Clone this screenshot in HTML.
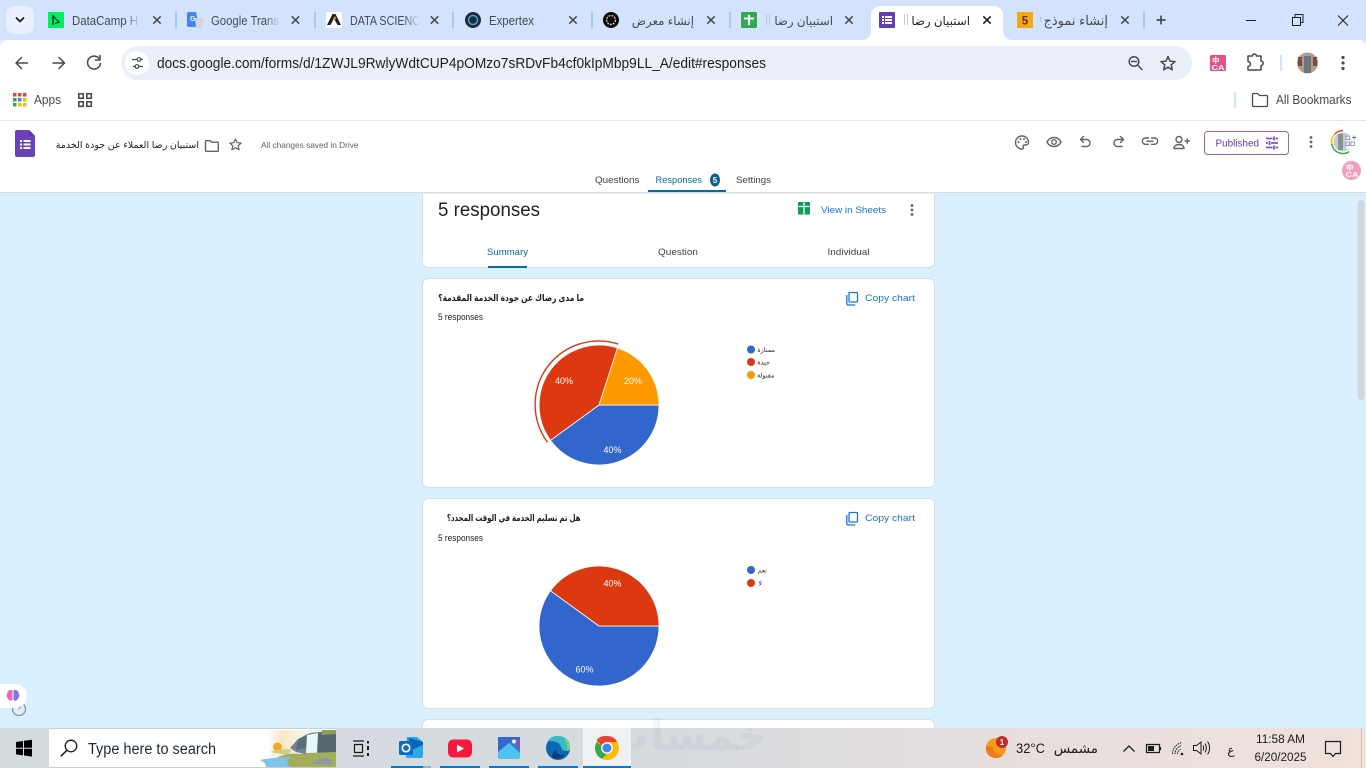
<!DOCTYPE html>
<html lang="en"><head><meta charset="utf-8"><title>Responses</title>
<style>
html,body{margin:0;padding:0;width:1366px;height:768px;overflow:hidden;background:#d9f0fe}
svg{display:block;position:absolute;left:0;top:0}
text{font-family:"Liberation Sans","Noto Sans CJK SC",sans-serif}
.t{font-size:12.5px;fill:#474a4f}
.ta{font-size:11.8px;fill:#474a4f}
.ar{font-family:"Liberation Sans","DejaVu Sans",sans-serif;direction:rtl}
.ic{fill:none;stroke:#5f6368;stroke-width:1.4;stroke-linecap:round;stroke-linejoin:round}
.bi{fill:none;stroke:#474a4f;stroke-width:1.5;stroke-linecap:round;stroke-linejoin:round}
.x{fill:none;stroke:#474a4f;stroke-width:1.5}
.tk{fill:none;stroke:#1c1c1c;stroke-width:1.2;stroke-linecap:round;stroke-linejoin:round}
</style></head><body>
<svg width="1366" height="768" viewBox="0 0 1366 768" xmlns="http://www.w3.org/2000/svg">
<defs>
<linearGradient id="tb" x1="0" x2="1" y1="0" y2="0"><stop offset="0" stop-color="#d3dbdf"/><stop offset=".5" stop-color="#d7dbe0"/><stop offset=".75" stop-color="#e7dedd"/><stop offset="1" stop-color="#f0e1da"/></linearGradient>
<linearGradient id="fd" x1="0" x2="1" y1="0" y2="0"><stop offset="0" stop-color="#d3e3fd" stop-opacity="0"/><stop offset="1" stop-color="#d3e3fd"/></linearGradient>
<linearGradient id="sk" x1="0" x2="1" y1="0" y2="0"><stop offset="0" stop-color="#fff"/><stop offset=".12" stop-color="#fff"/><stop offset=".3" stop-color="#fde6c8"/><stop offset=".55" stop-color="#f4f2e4"/><stop offset="1" stop-color="#dfeef2"/></linearGradient>
</defs>

<!-- page background -->
<rect width="1366" height="768" fill="#d9f0fe"/>

<!-- tab strip -->
<rect width="1366" height="40" fill="#d3e3fd"/>
<rect x="6" y="6" width="28" height="28" rx="8" fill="#e8f0fd"/>
<path d="M16.500 18l3.500 3.500 3.500-3.500" fill="none" stroke="#1f1f1f" stroke-width="1.800" stroke-linecap="round" stroke-linejoin="round"/>

<!-- separators -->
<g fill="#a8c7fa"><rect x="175" y="12" width="2" height="16"/><rect x="314" y="12" width="2" height="16"/><rect x="452" y="12" width="2" height="16"/><rect x="591" y="12" width="2" height="16"/><rect x="729" y="12" width="2" height="16"/><rect x="1143" y="12" width="2" height="16"/></g>

<!-- tab 1 -->
<rect x="48" y="12" width="16" height="16" fill="#03ef62"/>
<path d="M53 15v10M53 16l6 6-4 1.500" fill="none" stroke="#05192d" stroke-width="1.200"/>
<text x="72" y="25" class="t" textLength="66" lengthAdjust="spacingAndGlyphs">DataCamp H</text>
<rect x="126" y="12" width="14" height="16" fill="url(#fd)"/>
<!-- tab 2 -->
<path d="M189 12h7l3 15h-10a2 2 0 0 1-2-2V14a2 2 0 0 1 2-2z" fill="#4285f4"/>
<path d="M195 18h8v10h-7z" fill="#d6d6d6"/>
<text x="190" y="21" font-size="7" font-weight="bold" fill="#fff">G</text>
<text x="211" y="25" class="t" textLength="68" lengthAdjust="spacingAndGlyphs">Google Trans</text>
<rect x="265" y="12" width="15" height="16" fill="url(#fd)"/>
<!-- tab 3 -->
<rect x="326" y="12" width="16" height="16" fill="#fff"/>
<path d="M327 25l5.500-11h3l5.500 11h-3.500l-3.500-6.500-3.500 6.500z" fill="#222"/><path d="M333 19l2-3 1.200 3z" fill="#f59e0b"/>
<text x="350" y="25" class="t" textLength="70" lengthAdjust="spacingAndGlyphs">DATA SCIENC</text>
<rect x="404" y="12" width="16" height="16" fill="url(#fd)"/>
<!-- tab 4 -->
<circle cx="473" cy="20" r="8" fill="#1d2b36"/><circle cx="473" cy="20" r="4.500" fill="none" stroke="#4aa3d8" stroke-width="1.500"/>
<text x="489" y="25" class="t" textLength="45" lengthAdjust="spacingAndGlyphs">Expertex</text>
<!-- tab 5 -->
<circle cx="611" cy="20" r="8" fill="#0b0b0b"/><circle cx="611" cy="20" r="4.400" fill="none" stroke="#cfcfcf" stroke-width="1.300" stroke-dasharray="2 1"/>
<text x="694" y="25" class="ta ar" text-anchor="start">إنشاء معرض</text>
<!-- tab 6 -->
<rect x="741" y="12" width="16" height="16" rx="1.500" fill="#34a853"/><path d="M749 15v10M744 18.500h10" stroke="#fff" stroke-width="2"/>
<text x="833" y="25" class="ta ar" text-anchor="start">استبيان رضا</text>
<g fill="#b9c6dc"><rect x="766" y="14" width="1" height="11"/><rect x="769" y="14" width="1" height="11"/></g>

<!-- active tab -->
<path d="M862 40a9 9 0 0 0 9-9V15a9 9 0 0 1 9-9h114a9 9 0 0 1 9 9v16a9 9 0 0 0 9 9z" fill="#fff"/>
<rect x="879" y="12" width="16" height="16" rx="1" fill="#673ab7"/>
<g fill="#fff"><rect x="882" y="16" width="2" height="2"/><rect x="885" y="16" width="7" height="2"/><rect x="882" y="19" width="2" height="2"/><rect x="885" y="19" width="7" height="2"/><rect x="882" y="22" width="2" height="2"/><rect x="885" y="22" width="7" height="2"/></g>
<text x="970" y="25" class="ta ar" text-anchor="start" style="fill:#1f1f1f">استبيان رضا</text>
<g fill="#c9c9c9"><rect x="904" y="14" width="1" height="11"/><rect x="907" y="14" width="1" height="11"/></g>
<!-- tab 8 -->
<rect x="1017" y="12" width="16" height="16" fill="#f9a51a"/>
<text x="1025" y="24.500" font-size="11.500" font-weight="bold" fill="#5b3a0a" text-anchor="middle">5</text>
<text x="1108" y="25" class="ar" font-size="13" fill="#474a4f" text-anchor="start">إنشاء نموذج</text>
<rect x="1040" y="17" width="1.500" height="5" fill="#b9c6dc"/>

<!-- close icons -->
<g class="x">
<path d="M153.300 16.300l7.400 7.400M160.700 16.300l-7.400 7.400"/><path d="M291.800 16.300l7.400 7.400M299.200 16.300l-7.400 7.400"/><path d="M430.800 16.300l7.400 7.400M438.200 16.300l-7.400 7.400"/><path d="M569.300 16.300l7.400 7.400M576.700 16.300l-7.400 7.400"/><path d="M707.300 16.300l7.400 7.400M714.700 16.300l-7.400 7.400"/><path d="M845.300 16.300l7.400 7.400M852.700 16.300l-7.400 7.400"/><path d="M983.300 16.300l7.400 7.400M990.700 16.300l-7.400 7.400" style="stroke:#1f1f1f"/><path d="M1121.300 16.300l7.400 7.400M1128.700 16.300l-7.400 7.400"/>
</g>
<path d="M1161 15.500v9M1156.500 20h9" stroke="#474a4f" stroke-width="1.700" fill="none"/>
<!-- window controls -->
<path d="M1246 20.500h10" stroke="#1f1f1f" stroke-width="1"/>
<path d="M1292.500 17.500h8v8h-8zM1295 17v-2.500h8v8h-2.500" fill="none" stroke="#1f1f1f" stroke-width="1"/>
<path d="M1338 15.500l10 10M1348 15.500l-10 10" stroke="#1f1f1f" stroke-width="1"/>

<!-- toolbar -->
<path d="M0 48a8 8 0 0 1 8-8H1358a8 8 0 0 1 8 8V121H0z" fill="#fff"/>
<path d="M27.500 63H16.500M21.500 57.500l-5.500 5.500 5.500 5.500" class="bi"/>
<path d="M53 63h11M59 57.500l5.500 5.500-5.500 5.500" class="bi"/>
<path d="M99.500 59a6.500 6.500 0 1 0 1 4.500M100 55.500v4.500h-4.500" class="bi"/>
<rect x="121" y="46" width="1071" height="34" rx="17" fill="#eaeff9"/>
<circle cx="137" cy="63" r="12" fill="#fff"/>
<path d="M132 59.500h5M141 59.500h2M133 66.500h2M139 66.500h4" fill="none" stroke="#474a4f" stroke-width="1.300"/><circle cx="139" cy="59.500" r="1.800" fill="none" stroke="#474a4f" stroke-width="1.200"/><circle cx="137" cy="66.500" r="1.800" fill="none" stroke="#474a4f" stroke-width="1.200"/>
<text x="157" y="68" font-size="14.300" fill="#1f1f1f" textLength="609" lengthAdjust="spacingAndGlyphs">docs.google.com/forms/d/1ZWJL9RwlyWdtCUP4pOMzo7sRDvFb4cf0kIpMbp9LL_A/edit#responses</text>
<circle cx="1134" cy="61.500" r="4.800" class="bi"/><path d="M1138 65.500l4 4M1131.500 61.500h5" class="bi"/>
<path d="M1168 56.500l2 4.600 5 .5-3.800 3.300 1.100 4.900-4.300-2.600-4.300 2.600 1.100-4.900-3.800-3.300 5-.5z" class="bi"/>
<rect x="1210" y="55" width="16" height="16" rx="1.500" fill="#e84f88"/>
<text x="1212" y="62.800" font-size="7.500" font-weight="bold" fill="#fff" style="font-family:'Noto Sans CJK SC',sans-serif">中</text>
<text x="1211.500" y="69.800" font-size="7.500" font-weight="bold" fill="#fff" textLength="13" lengthAdjust="spacingAndGlyphs">CA</text>
<path d="M1248 56h4.500a2 2 0 0 1 4 0h4.500v5a2.200 2.200 0 0 1 0 4.400v4.600h-13v-3.500a2.500 2.500 0 0 0 0-5z" class="bi"/>
<rect x="1280" y="55" width="2" height="16" fill="#d3e3fd"/>
<circle cx="1307.500" cy="63" r="10.500" fill="#a89e92"/><path d="M1304 56h7v17h-7z" fill="#70757b"/><path d="M1298 57h4v9h-4zM1313 57h4v9h-4z" fill="#7a4c40"/>
<g fill="#474a4f"><circle cx="1343" cy="57.500" r="1.600"/><circle cx="1343" cy="63" r="1.600"/><circle cx="1343" cy="68.500" r="1.600"/></g>

<!-- bookmarks bar -->
<g>
<rect x="13" y="93" width="3.500" height="3.500" fill="#ea4335"/><rect x="18" y="93" width="3.500" height="3.500" fill="#ea4335"/><rect x="23" y="93" width="3.500" height="3.500" fill="#ea4335"/>
<rect x="13" y="98" width="3.500" height="3.500" fill="#34a853"/><rect x="18" y="98" width="3.500" height="3.500" fill="#4285f4"/><rect x="23" y="98" width="3.500" height="3.500" fill="#fbbc04"/>
<rect x="13" y="103" width="3.500" height="3.500" fill="#34a853"/><rect x="18" y="103" width="3.500" height="3.500" fill="#fbbc04"/><rect x="23" y="103" width="3.500" height="3.500" fill="#fbbc04"/>
</g>
<text x="34" y="104" font-size="12.500" fill="#474a4f" textLength="27" lengthAdjust="spacingAndGlyphs">Apps</text>
<g fill="none" stroke="#474a4f" stroke-width="1.600"><rect x="78.800" y="93.800" width="4.500" height="4.500"/><rect x="86.800" y="93.800" width="4.500" height="4.500"/><rect x="78.800" y="101.800" width="4.500" height="4.500"/><rect x="86.800" y="101.800" width="4.500" height="4.500"/></g>
<rect x="1234" y="92" width="2" height="16" fill="#d3e3fd"/>
<path d="M1252.500 94.500a1 1 0 0 1 1-1h4l2 2h7a1 1 0 0 1 1 1v9a1 1 0 0 1-1 1h-13a1 1 0 0 1-1-1z" fill="none" stroke="#474a4f" stroke-width="1.300"/>
<text x="1276" y="104" font-size="12.500" fill="#474a4f" textLength="75.500" lengthAdjust="spacingAndGlyphs">All Bookmarks</text>

<!-- forms header -->
<rect x="0" y="120" width="1366" height="1" fill="#e3e3e3"/>
<rect x="0" y="121" width="1366" height="71" fill="#fff"/>
<rect x="0" y="192" width="1366" height="1" fill="#d5dde3"/>
<path d="M15 132a2 2 0 0 1 2-2h12l6 6v19a2 2 0 0 1-2 2H17a2 2 0 0 1-2-2z" fill="#6d42b8"/>
<path d="M29 130l6 6h-6z" fill="#5a34a0"/>
<g fill="#fff"><rect x="20" y="140" width="2" height="2"/><rect x="23.500" y="140" width="7" height="2"/><rect x="20" y="143.500" width="2" height="2"/><rect x="23.500" y="143.500" width="7" height="2"/><rect x="20" y="147" width="2" height="2"/><rect x="23.500" y="147" width="7" height="2"/></g>
<text x="199" y="148" font-size="9.500" fill="#202124" class="ar" text-anchor="start">استبيان رضا العملاء عن جودة الخدمة</text>
<path d="M205.500 141.500a.8.8 0 0 1 .8-.8h4l1.500 1.500h5.700a.8.8 0 0 1 .8.800v7.500a.8.8 0 0 1-.8.800H206.300a.8.8 0 0 1-.8-.8z" class="ic"/>
<path d="M235.500 139l1.700 3.700 4 .4-3 2.700.9 4-3.600-2.100-3.600 2.100.9-4-3-2.700 4-.4z" fill="none" stroke="#5f6368" stroke-width="1.200" stroke-linejoin="round"/>
<text x="261" y="148" font-size="8.500" fill="#5f6368" textLength="97.500" lengthAdjust="spacingAndGlyphs">All changes saved in Drive</text>

<!-- header icons -->
<path d="M1022 136a6.500 6.500 0 0 0 0 13c1.400 0 1.700-1 1.200-1.900-.6-1 0-2.100 1.300-2.100h1.600a2.500 2.500 0 0 0 2.400-2.600c0-3.500-2.900-6.400-6.500-6.400z" class="ic"/>
<g fill="#5f6368"><circle cx="1018.500" cy="142" r="1"/><circle cx="1020.500" cy="139" r="1"/><circle cx="1024" cy="139" r="1"/><circle cx="1026" cy="142" r="1"/></g>
<path d="M1047 142c1.500-3 4-4.500 7-4.500s5.500 1.500 7 4.500c-1.500 3-4 4.500-7 4.500s-5.500-1.500-7-4.500z" class="ic"/><circle cx="1054" cy="142" r="2.300" class="ic"/>
<path d="M1083.500 136.500l-3 3 3 3M1081 139.500h5.500a3.500 3.500 0 0 1 0 7H1082" class="ic"/>
<path d="M1120.500 136.500l3 3-3 3M1123 139.500h-5.500a3.500 3.500 0 0 0 0 7h4.500" class="ic"/>
<path d="M1148.500 138h-3a3 3 0 0 0 0 6.300h3M1151.500 138h3a3 3 0 0 1 0 6.300h-3M1147 141.200h6" class="ic"/>
<circle cx="1179" cy="139.500" r="3" class="ic"/><path d="M1174 148.500c0-2.500 2-4 5-4s5 1.500 5 4zM1185 141h4.500M1187.200 138.800v4.500" class="ic"/>
<rect x="1204.500" y="131.500" width="84" height="23" rx="3" fill="#fff" stroke="#8a63cc" stroke-width="1"/>
<text x="1215.500" y="146.500" font-size="9.800" fill="#673ab7" textLength="43.500" lengthAdjust="spacingAndGlyphs">Published</text>
<path d="M1266 138.500h6.500M1275.500 138.500h2.500M1266 143h2M1271 143h7M1266 147.500h6.500M1275.500 147.500h2.500M1274 136.500v4M1269.500 141v4M1274 145.500v4" fill="none" stroke="#7e57c2" stroke-width="1.800"/>
<g fill="#5f6368"><circle cx="1311" cy="137.500" r="1.400"/><circle cx="1311" cy="142" r="1.400"/><circle cx="1311" cy="146.500" r="1.400"/></g>
<!-- avatar w/ ring -->
<circle cx="1343" cy="142" r="12.500" fill="#fff"/>
<path d="M1343 130.500a11.500 11.500 0 0 0-8.100 3.400" fill="none" stroke="#ea4335" stroke-width="1.500"/>
<path d="M1334.900 133.900a11.500 11.500 0 0 0-3.200 10" fill="none" stroke="#fbbc04" stroke-width="1.500"/>
<path d="M1331.700 143.900a11.500 11.500 0 0 0 11.300 9.600 11.500 11.500 0 0 0 6-1.700" fill="none" stroke="#34a853" stroke-width="1.500"/>
<circle cx="1343" cy="142" r="9.500" fill="#c9ccce"/><path d="M1338 134h5v16h-5z" fill="#8a8f94"/>
<path d="M1346 135h13v14h-13z" fill="#fff" opacity=".75"/>
<g fill="none" stroke="#7a8ea8" stroke-width=".8"><rect x="1346" y="136" width="3.500" height="3.500"/><rect x="1346" y="142" width="3.500" height="3.500"/><rect x="1351" y="142" width="3.500" height="3.500"/></g>
<path d="M1354 135.500v4M1352 137.500h4" stroke="#5b7fb5" stroke-width="1" fill="none"/>
<!-- pink translate pill -->
<path d="M1366 159h-14a11 11 0 0 0 0 22h14z" fill="#fff"/>
<circle cx="1351.500" cy="170.500" r="9.500" fill="#f29fb7"/>
<text x="1346" y="170" font-size="7.500" font-weight="bold" fill="#fff" style="font-family:'Noto Sans CJK SC',sans-serif">中</text>
<text x="1345.500" y="177" font-size="7.500" font-weight="bold" fill="#fff" textLength="13" lengthAdjust="spacingAndGlyphs">CA</text>

<!-- nav tabs -->
<text x="595" y="183" font-size="9.500" fill="#3c4043" textLength="44.500" lengthAdjust="spacingAndGlyphs">Questions</text>
<text x="655.500" y="183" font-size="9.500" fill="#0b6a9e" textLength="46.500" lengthAdjust="spacingAndGlyphs">Responses</text>
<ellipse cx="715" cy="180" rx="5" ry="6.500" fill="#0b5f8f"/><text x="715" y="183" font-size="8" font-weight="bold" fill="#fff" text-anchor="middle">5</text>
<text x="736" y="183" font-size="9.500" fill="#3c4043" textLength="35" lengthAdjust="spacingAndGlyphs">Settings</text>
<rect x="648" y="190" width="78" height="2" fill="#0b6a9e"/>

<!-- scrollbar -->
<rect x="1357.500" y="200" width="7" height="200" rx="3.500" fill="#d0d7db"/>

<!-- card 1 -->
<path d="M422.500 193v69a5.500 5.500 0 0 0 5.500 5.500h501a5.500 5.500 0 0 0 5.500-5.500v-69z" fill="#fff" stroke="#dadfe3"/>
<text x="438" y="216" font-size="19.500" fill="#202124" textLength="102" lengthAdjust="spacingAndGlyphs">5 responses</text>
<rect x="798" y="202" width="12" height="12.500" rx="1" fill="#0f9d58"/><path d="M798.500 206.500h11M804 202.500v11.500" stroke="#fff" stroke-width="1.300"/>
<text x="821" y="213" font-size="9.500" fill="#1a73e8" textLength="65" lengthAdjust="spacingAndGlyphs">View in Sheets</text>
<g fill="#5f6368"><circle cx="912" cy="205.500" r="1.400"/><circle cx="912" cy="210" r="1.400"/><circle cx="912" cy="214.500" r="1.400"/></g>
<text x="487" y="255" font-size="9.500" fill="#0b6a9e" textLength="41" lengthAdjust="spacingAndGlyphs">Summary</text>
<text x="658" y="255" font-size="9.500" fill="#3c4043" textLength="40" lengthAdjust="spacingAndGlyphs">Question</text>
<text x="827.500" y="255" font-size="9.500" fill="#3c4043" textLength="42" lengthAdjust="spacingAndGlyphs">Individual</text>
<rect x="488" y="266" width="39" height="2" fill="#0b6a9e"/>

<!-- card 2 -->
<rect x="422.500" y="278.500" width="512" height="209" rx="5.500" fill="#fff" stroke="#dadfe3"/>
<text transform="translate(584 301) scale(.793 1)" x="0" y="0" font-size="9.500" font-weight="bold" fill="#202124" class="ar" text-anchor="start">ما مدى رضاك عن جودة الخدمة المقدمة؟</text>
<path d="M850 292.500h6.500a1 1 0 0 1 1 1v7.500a1 1 0 0 1-1 1H850a1 1 0 0 1-1-1v-7.500a1 1 0 0 1 1-1zM846.800 295v8.500a1.500 1.500 0 0 0 1.500 1.500h7" fill="none" stroke="#1a73e8" stroke-width="1.300"/>
<text x="865" y="301" font-size="9.500" fill="#1a73e8" textLength="50" lengthAdjust="spacingAndGlyphs">Copy chart</text>
<text x="438" y="320" font-size="8.800" fill="#202124" textLength="45" lengthAdjust="spacingAndGlyphs">5 responses</text>
<!-- pie 1 -->
<path d="M599 405L659 405A60 60 0 0 1 550.500 440.300Z" fill="#3366cc" stroke="#fff" stroke-width=".8"/>
<path d="M599 405L550.500 440.300A60 60 0 0 1 617.500 348Z" fill="#dc3912" stroke="#fff" stroke-width=".8"/>
<path d="M599 405L617.500 348A60 60 0 0 1 659 405Z" fill="#ff9900" stroke="#fff" stroke-width=".8"/>
<path d="M618.200 344.100A63.500 63.500 0 0 0 547.600 442.300" fill="none" stroke="#dc3912" stroke-width="1.400"/>
<g font-size="9" fill="#fff" text-anchor="middle">
<text x="564" y="384">40%</text><text x="633" y="384">20%</text><text x="612.500" y="453">40%</text>
</g>
<circle cx="751" cy="349.500" r="4" fill="#3366cc"/><circle cx="751" cy="362" r="4" fill="#dc3912"/><circle cx="751" cy="375" r="4" fill="#ff9900"/>
<g font-size="6.500" fill="#333">
<text x="775" y="352" class="ar" text-anchor="start">ممتازة</text><text x="770" y="364.500" class="ar" text-anchor="start">جيدة</text><text x="774.500" y="377.500" class="ar" text-anchor="start">مقبولة</text>
</g>

<!-- card 3 -->
<rect x="422.500" y="498.500" width="512" height="210" rx="5.500" fill="#fff" stroke="#dadfe3"/>
<text transform="translate(580.500 521) scale(.735 1)" x="0" y="0" font-size="9.500" font-weight="bold" fill="#202124" class="ar" text-anchor="start">هل تم تسليم الخدمة في الوقت المحدد؟</text>
<path d="M850 512.500h6.500a1 1 0 0 1 1 1v7.500a1 1 0 0 1-1 1H850a1 1 0 0 1-1-1v-7.500a1 1 0 0 1 1-1zM846.800 515v8.500a1.500 1.500 0 0 0 1.500 1.500h7" fill="none" stroke="#1a73e8" stroke-width="1.300"/>
<text x="865" y="521" font-size="9.500" fill="#1a73e8" textLength="50" lengthAdjust="spacingAndGlyphs">Copy chart</text>
<text x="438" y="541" font-size="8.800" fill="#202124" textLength="45" lengthAdjust="spacingAndGlyphs">5 responses</text>
<!-- pie 2 -->
<path d="M599 626L659 626A60 60 0 1 1 550.500 590.700Z" fill="#3366cc" stroke="#fff" stroke-width=".8"/>
<path d="M599 626L550.500 590.700A60 60 0 0 1 659 626Z" fill="#dc3912" stroke="#fff" stroke-width=".8"/>
<g font-size="9" text-anchor="middle" fill="#fff">
<text x="612.500" y="586.500">40%</text><text x="584.500" y="672.500">60%</text>
</g>
<circle cx="751" cy="570" r="4" fill="#3366cc"/><circle cx="751" cy="583" r="4" fill="#dc3912"/>
<text x="767" y="572.500" font-size="6.500" fill="#333" class="ar" text-anchor="start">نعم</text>
<text x="762" y="585.500" font-size="6.500" fill="#333" class="ar" text-anchor="start">لا</text>

<!-- card 4 -->
<rect x="422.500" y="719.500" width="512" height="40" rx="5.500" fill="#fff" stroke="#dadfe3"/>

<!-- floating left widgets -->
<circle cx="19" cy="709" r="6.500" fill="none" stroke="#8b9499" stroke-width="1.300"/><path d="M19 709l2.500-3.500" stroke="#8b9499" stroke-width="1.100"/>
<path d="M0 684h15a12 12 0 0 1 0 24H0z" fill="#fff"/>
<path d="M12.500 690.500c-3-1.500-5.500 1-5 3-1.500 1.500-1 4 .5 4.500 0 2.500 3 3.500 4.500 2z" fill="#e56bb0"/>
<path d="M13.500 690.500c3-1.500 5.500 1 5 3 1.500 1.500 1 4-.5 4.500 0 2.500-3 3.500-4.500 2z" fill="#7a78e8"/>

<!-- taskbar -->
<rect x="0" y="728" width="1366" height="40" fill="url(#tb)"/>
<!-- watermark -->
<text x="687" y="750" font-size="42" font-weight="bold" fill="#8d979c" fill-opacity=".1" text-anchor="middle" style="font-family:'Liberation Sans','DejaVu Sans',sans-serif">خمسات</text>
<rect x="583" y="728" width="48" height="40" fill="#eef0f2"/>
<!-- start -->
<g fill="#000"><path d="M16 742l7-1v6.700h-7zM24 740.800l8-1.100v8h-8zM16 748.700h7v6.700l-7-1zM24 748.700h8v7.900l-8-1.100z"/></g>
<!-- search box -->
<rect x="49" y="729" width="287" height="38" fill="#fff"/>
<path d="M49 728.500h287M49 767.500h287" stroke="#c9ced2" fill="none"/>
<circle cx="71" cy="746" r="5.800" fill="none" stroke="#1c1c1c" stroke-width="1.300"/><path d="M66.800 750.300l-6 6" stroke="#1c1c1c" stroke-width="1.500"/>
<text x="88" y="754" font-size="15.500" fill="#1f2a33" textLength="128" lengthAdjust="spacingAndGlyphs">Type here to search</text>
<!-- search highlight image -->
<rect x="258" y="730" width="78" height="37" fill="url(#sk)"/>
<circle cx="277.500" cy="747" r="4.500" fill="#f6a623"/>
<path d="M270 752c8-3 15-3 22-2l-4 5z" fill="#c9cf7e"/>
<path d="M290 748l8-9 12-6 26-3v22l-22 4-18-4z" fill="#6f8494"/>
<path d="M298 740l10-6-2 14-10 2z" fill="#5a6c7a"/>
<path d="M316 733h20v20l-18 2z" fill="#56666f"/>
<path d="M322 730h14v4l-14 1z" fill="#8f9f5a"/>
<path d="M307 735l11-2-1 20h-11z" fill="#e8f6fc"/>
<path d="M278 757c8-3 14-4 22-3l8-1 28-1v15h-52z" fill="#a4ad5a"/>
<path d="M260 760c10-2 22-3 32-3-6 3-6 5-2 10h-24c0-3-2-5-6-7z" fill="#7ec4ea"/>
<path d="M312 764c2-5 14-8 20-4v4z" fill="#8e99a3"/>
<!-- task view -->
<path d="M353.500 741h10M353.500 756h10M354.500 744.500h8v8h-8z" class="tk"/><path d="M368 741v2.500M368 746v4M368 753v3" stroke="#1c1c1c" stroke-width="2"/>
<!-- outlook -->
<path d="M407 737h10l6 5v14a2 2 0 0 1-2 2h-13a2 2 0 0 1-2-2v-6z" fill="#28a8ea"/><path d="M409 738l14 4v3l-14 6z" fill="#0364b8"/>
<rect x="399" y="741" width="14" height="14" rx="1.500" fill="#0f6cbd"/><circle cx="406" cy="748" r="3.700" fill="none" stroke="#fff" stroke-width="1.700"/>
<!-- youtube -->
<rect x="448" y="739.500" width="24" height="18" rx="5" fill="#f8173e"/><path d="M457 744.500l7 4-7 4z" fill="#fff"/>
<!-- photos -->
<rect x="498" y="737" width="22" height="22" rx="2.500" fill="#2f7fd6"/><path d="M498 737h22v9l-8-6-14 12z" fill="#3a66c9"/><path d="M512 740h8v10z" fill="#7d58b5"/><path d="M498 752l11-9 11 10v4a2 2 0 0 1-2 2h-16a3 3 0 0 1-4-3z" fill="#4cc4ee"/><circle cx="514" cy="741.500" r="2" fill="#eaf2fb"/>
<!-- edge -->
<circle cx="558" cy="748" r="12" fill="#0c66b4"/><path d="M548 741c2-4 6-5 10-5 7 0 12 5 12 11 0 3-1 4-4 4-6 0-4-6-8-8-3-2-7-2-10-2z" fill="#37b9c6"/><path d="M563 737.500c4 2 7 6 7 10 0 2-1 3-3 3 1-5-1-9-4-13z" fill="#7ed56f"/><path d="M556 750c0 4 5 6 9 5-3 3-8 5-12 3-2-2 0-7 3-8z" fill="#0a3d80"/>
<!-- chrome -->
<circle cx="607" cy="748" r="12" fill="#fbbc04"/>
<path d="M607 736a12 12 0 0 1 10.400 6H607a6 6 0 0 0-5.600 3.800l-4.800-5.800A12 12 0 0 1 607 736z" fill="#ea4335"/>
<path d="M596.600 742a12 12 0 0 0 5.200 16.800l5.200-5a6 6 0 0 1-5.600-8z" fill="#34a853"/>
<circle cx="607" cy="748" r="5.800" fill="#fff"/><circle cx="607" cy="748" r="4.500" fill="#4285f4"/>
<!-- taskbar underlines -->
<g fill="#0a78d2"><rect x="391" y="766" width="32" height="2"/><rect x="440" y="766" width="40" height="2"/><rect x="489" y="766" width="40" height="2"/><rect x="538" y="766" width="40" height="2"/><rect x="583" y="766" width="48" height="2"/></g>
<rect x="423" y="766" width="8" height="2" fill="#7cb8e6"/>

<!-- tray -->
<circle cx="996" cy="748" r="10" fill="#f59a1e"/><path d="M986 746a10 10 0 0 0 17 9c-5 0-10-2-10-8z" fill="#ee7a1c"/>
<circle cx="1002" cy="742" r="6" fill="#c42b25"/><text x="1002" y="745" font-size="8" font-weight="bold" fill="#fff" text-anchor="middle">1</text>
<text x="1016" y="753" font-size="13.500" fill="#1c1c1c" textLength="29" lengthAdjust="spacingAndGlyphs">32°C</text>
<text x="1098" y="753" font-size="13.500" fill="#1c1c1c" class="ar" text-anchor="start">مشمس</text>
<path d="M1123.500 751.500l5.500-5.500 5.500 5.500" fill="none" stroke="#1c1c1c" stroke-width="1.300"/>
<path d="M1146.500 744.500h13v8h-13zM1160.500 747v3" fill="none" stroke="#1c1c1c" stroke-width="1.200"/><rect x="1148" y="746" width="6" height="5" fill="#1c1c1c"/>
<path d="M1172.500 754c0-6 4-10 9-11.500M1175 754c0-4 2.500-7.200 6.500-8.300M1177.500 754c0-2.300 1.400-4.200 4-5" fill="none" stroke="#1c1c1c" stroke-width="1" stroke-dasharray="1.500 .8"/><circle cx="1182" cy="754" r="1.300" fill="#1c1c1c"/>
<path d="M1193.500 745.500h3l4.500-3.500v12l-4.500-3.500h-3zM1203 745.500c.8 1.500.8 3.500 0 5M1205 743.500c1.700 2.800 1.700 6.200 0 9M1207.500 741.500c2.800 4 2.800 9 0 13" fill="none" stroke="#1c1c1c" stroke-width="1"/>
<text x="1231" y="754" font-size="12" fill="#1c1c1c" text-anchor="middle">ع</text>
<text x="1280.500" y="743" font-size="12.300" fill="#1c1c1c" text-anchor="middle" textLength="49" lengthAdjust="spacingAndGlyphs">11:58 AM</text>
<text x="1280.500" y="761" font-size="12.300" fill="#1c1c1c" text-anchor="middle" textLength="52" lengthAdjust="spacingAndGlyphs">6/20/2025</text>
<path d="M1325.500 741.500h15v12h-5l-2.500 3-2.500-3h-5z" fill="none" stroke="#1c1c1c" stroke-width="1.200"/>
<rect x="1361" y="728" width="1" height="40" fill="#cfc6c1"/>
</svg>
</body></html>
